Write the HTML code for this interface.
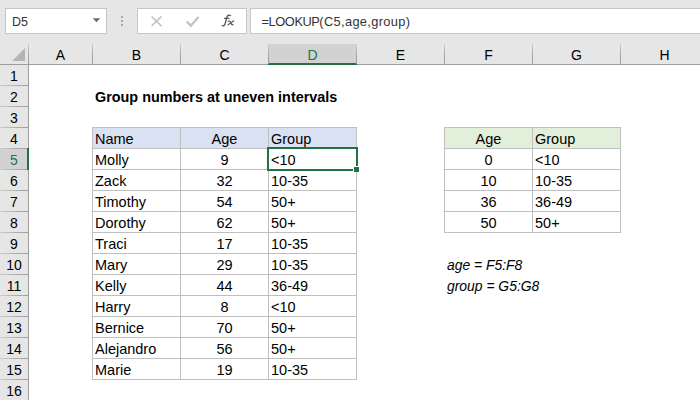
<!DOCTYPE html>
<html><head><meta charset="utf-8"><style>
html,body{margin:0;padding:0;}
body{width:700px;height:400px;position:relative;overflow:hidden;background:#fff;font-family:"Liberation Sans",sans-serif;}
.r{position:absolute;}
.t{position:absolute;white-space:nowrap;line-height:normal;}
</style></head><body>
<div class="r" style="left:0px;top:0px;width:700px;height:44px;background:#e6e6e6;"></div>
<div class="r" style="left:5px;top:8px;width:102px;height:26px;background:#ffffff;box-sizing:border-box;border:1px solid #c6c6c6;"></div>
<div class="t" style="left:12px;top:14.69px;text-align:left;font-size:12.5px;color:#333;font-weight:normal;font-style:normal;">D5</div>
<svg class="r" style="left:92px;top:17px" width="10" height="7"><path d="M0.8 1.2 L8.2 1.2 L4.5 5.2 Z" fill="#6a6a6a"/></svg>
<div class="r" style="left:121px;top:16px;width:2px;height:2px;background:#a6a6a6;"></div>
<div class="r" style="left:121px;top:20px;width:2px;height:2px;background:#a6a6a6;"></div>
<div class="r" style="left:121px;top:24px;width:2px;height:2px;background:#a6a6a6;"></div>
<div class="r" style="left:137px;top:8px;width:110px;height:26px;background:#ffffff;box-sizing:border-box;border:1px solid #c6c6c6;"></div>
<svg class="r" style="left:150px;top:15px" width="13" height="13"><path d="M1.6 1.5 L11.4 11 M11.4 1.5 L1.6 11" stroke="#bdbdbd" stroke-width="1.6" fill="none"/></svg>
<svg class="r" style="left:185px;top:14.5px" width="15" height="13"><path d="M1.8 6.5 L5.8 10.8 L13.5 2" stroke="#c4c4c4" stroke-width="2.4" fill="none"/></svg>
<svg class="r" style="left:219px;top:12px" width="18" height="17"><g fill="none" stroke="#5c5c5c" stroke-linecap="round"><path d="M3.4 13.5 C4.6 14.4 5.6 13.6 6.1 11.6 L8 5 C8.6 3.1 10 2.7 11.5 3.6" stroke-width="1.35"/><path d="M5.4 6.4 L9.9 6.4" stroke-width="1.2"/><path d="M9.3 9.4 C10.6 8.9 11.4 9.6 11.9 10.9 L12.3 11.9 C12.8 12.8 13.6 12.8 14 12.6" stroke-width="1.2"/><path d="M14.6 8.9 L9 12.7" stroke-width="1.2"/></g></svg>
<div class="r" style="left:250px;top:8px;width:460px;height:26px;background:#ffffff;box-sizing:border-box;border:1px solid #c6c6c6;"></div>
<div class="t" style="left:261.5px;top:14.42px;text-align:left;font-size:12.8px;color:#333;font-weight:normal;font-style:normal;letter-spacing:-0.4px;">=LOOKUP</div>
<div class="t" style="left:319.3px;top:14.42px;text-align:left;font-size:12.8px;color:#333;font-weight:normal;font-style:normal;letter-spacing:0.36px;">(C5,age,group)</div>
<div class="r" style="left:0px;top:34px;width:700px;height:30px;background:#e6e6e6;"></div>
<svg class="r" style="left:12px;top:48px" width="14" height="14"><path d="M13 0 L13 13 L0.3 13 Z" fill="#b4b4b4"/></svg>
<div class="t" style="left:29px;top:47.33px;width:63px;text-align:center;font-size:14px;color:#000;font-weight:normal;font-style:normal;">A</div>
<div class="t" style="left:93px;top:47.33px;width:87px;text-align:center;font-size:14px;color:#000;font-weight:normal;font-style:normal;">B</div>
<div class="t" style="left:181px;top:47.33px;width:87px;text-align:center;font-size:14px;color:#000;font-weight:normal;font-style:normal;">C</div>
<div class="r" style="left:268px;top:44px;width:88px;height:20px;background:#d2d2d2;"></div>
<div class="r" style="left:268px;top:63px;width:89px;height:2px;background:#217346;"></div>
<div class="t" style="left:269px;top:47.33px;width:87px;text-align:center;font-size:14px;color:#217346;font-weight:normal;font-style:normal;">D</div>
<div class="t" style="left:357px;top:47.33px;width:87px;text-align:center;font-size:14px;color:#000;font-weight:normal;font-style:normal;">E</div>
<div class="t" style="left:445px;top:47.33px;width:87px;text-align:center;font-size:14px;color:#000;font-weight:normal;font-style:normal;">F</div>
<div class="t" style="left:533px;top:47.33px;width:87px;text-align:center;font-size:14px;color:#000;font-weight:normal;font-style:normal;">G</div>
<div class="t" style="left:621px;top:47.33px;width:87px;text-align:center;font-size:14px;color:#000;font-weight:normal;font-style:normal;">H</div>
<div class="r" style="left:28px;top:44px;width:1px;height:20px;background:linear-gradient(#cfcfcf,#a9a9a9 50%,#9a9a9a);"></div>
<div class="r" style="left:92px;top:44px;width:1px;height:20px;background:linear-gradient(#cfcfcf,#a9a9a9 50%,#9a9a9a);"></div>
<div class="r" style="left:180px;top:44px;width:1px;height:20px;background:linear-gradient(#cfcfcf,#a9a9a9 50%,#9a9a9a);"></div>
<div class="r" style="left:268px;top:44px;width:1px;height:20px;background:linear-gradient(#cfcfcf,#a9a9a9 50%,#9a9a9a);"></div>
<div class="r" style="left:356px;top:44px;width:1px;height:20px;background:linear-gradient(#cfcfcf,#a9a9a9 50%,#9a9a9a);"></div>
<div class="r" style="left:444px;top:44px;width:1px;height:20px;background:linear-gradient(#cfcfcf,#a9a9a9 50%,#9a9a9a);"></div>
<div class="r" style="left:532px;top:44px;width:1px;height:20px;background:linear-gradient(#cfcfcf,#a9a9a9 50%,#9a9a9a);"></div>
<div class="r" style="left:620px;top:44px;width:1px;height:20px;background:linear-gradient(#cfcfcf,#a9a9a9 50%,#9a9a9a);"></div>
<div class="r" style="left:0px;top:64px;width:268px;height:1px;background:#9e9e9e;"></div>
<div class="r" style="left:357px;top:64px;width:343px;height:1px;background:#9e9e9e;"></div>
<div class="r" style="left:0px;top:65px;width:28px;height:335px;background:#e6e6e6;"></div>
<div class="t" style="left:0px;top:68.33px;width:28px;text-align:center;font-size:14px;color:#000;font-weight:normal;font-style:normal;">1</div>
<div class="r" style="left:0px;top:85px;width:28px;height:1px;background:linear-gradient(to right,#cdcdcd,#acacac 60%,#a0a0a0);"></div>
<div class="t" style="left:0px;top:89.33px;width:28px;text-align:center;font-size:14px;color:#000;font-weight:normal;font-style:normal;">2</div>
<div class="r" style="left:0px;top:106px;width:28px;height:1px;background:linear-gradient(to right,#cdcdcd,#acacac 60%,#a0a0a0);"></div>
<div class="t" style="left:0px;top:110.33px;width:28px;text-align:center;font-size:14px;color:#000;font-weight:normal;font-style:normal;">3</div>
<div class="r" style="left:0px;top:127px;width:28px;height:1px;background:linear-gradient(to right,#cdcdcd,#acacac 60%,#a0a0a0);"></div>
<div class="t" style="left:0px;top:131.33px;width:28px;text-align:center;font-size:14px;color:#000;font-weight:normal;font-style:normal;">4</div>
<div class="r" style="left:0px;top:148px;width:28px;height:1px;background:linear-gradient(to right,#cdcdcd,#acacac 60%,#a0a0a0);"></div>
<div class="r" style="left:0px;top:149px;width:27px;height:20px;background:#d2d2d2;"></div>
<div class="t" style="left:0px;top:152.33px;width:28px;text-align:center;font-size:14px;color:#217346;font-weight:normal;font-style:normal;">5</div>
<div class="r" style="left:0px;top:169px;width:28px;height:1px;background:linear-gradient(to right,#cdcdcd,#acacac 60%,#a0a0a0);"></div>
<div class="t" style="left:0px;top:173.33px;width:28px;text-align:center;font-size:14px;color:#000;font-weight:normal;font-style:normal;">6</div>
<div class="r" style="left:0px;top:190px;width:28px;height:1px;background:linear-gradient(to right,#cdcdcd,#acacac 60%,#a0a0a0);"></div>
<div class="t" style="left:0px;top:194.33px;width:28px;text-align:center;font-size:14px;color:#000;font-weight:normal;font-style:normal;">7</div>
<div class="r" style="left:0px;top:211px;width:28px;height:1px;background:linear-gradient(to right,#cdcdcd,#acacac 60%,#a0a0a0);"></div>
<div class="t" style="left:0px;top:215.33px;width:28px;text-align:center;font-size:14px;color:#000;font-weight:normal;font-style:normal;">8</div>
<div class="r" style="left:0px;top:232px;width:28px;height:1px;background:linear-gradient(to right,#cdcdcd,#acacac 60%,#a0a0a0);"></div>
<div class="t" style="left:0px;top:236.33px;width:28px;text-align:center;font-size:14px;color:#000;font-weight:normal;font-style:normal;">9</div>
<div class="r" style="left:0px;top:253px;width:28px;height:1px;background:linear-gradient(to right,#cdcdcd,#acacac 60%,#a0a0a0);"></div>
<div class="t" style="left:0px;top:257.33px;width:28px;text-align:center;font-size:14px;color:#000;font-weight:normal;font-style:normal;">10</div>
<div class="r" style="left:0px;top:274px;width:28px;height:1px;background:linear-gradient(to right,#cdcdcd,#acacac 60%,#a0a0a0);"></div>
<div class="t" style="left:0px;top:278.33px;width:28px;text-align:center;font-size:14px;color:#000;font-weight:normal;font-style:normal;">11</div>
<div class="r" style="left:0px;top:295px;width:28px;height:1px;background:linear-gradient(to right,#cdcdcd,#acacac 60%,#a0a0a0);"></div>
<div class="t" style="left:0px;top:299.33px;width:28px;text-align:center;font-size:14px;color:#000;font-weight:normal;font-style:normal;">12</div>
<div class="r" style="left:0px;top:316px;width:28px;height:1px;background:linear-gradient(to right,#cdcdcd,#acacac 60%,#a0a0a0);"></div>
<div class="t" style="left:0px;top:320.33px;width:28px;text-align:center;font-size:14px;color:#000;font-weight:normal;font-style:normal;">13</div>
<div class="r" style="left:0px;top:337px;width:28px;height:1px;background:linear-gradient(to right,#cdcdcd,#acacac 60%,#a0a0a0);"></div>
<div class="t" style="left:0px;top:341.33px;width:28px;text-align:center;font-size:14px;color:#000;font-weight:normal;font-style:normal;">14</div>
<div class="r" style="left:0px;top:358px;width:28px;height:1px;background:linear-gradient(to right,#cdcdcd,#acacac 60%,#a0a0a0);"></div>
<div class="t" style="left:0px;top:362.33px;width:28px;text-align:center;font-size:14px;color:#000;font-weight:normal;font-style:normal;">15</div>
<div class="r" style="left:0px;top:379px;width:28px;height:1px;background:linear-gradient(to right,#cdcdcd,#acacac 60%,#a0a0a0);"></div>
<div class="t" style="left:0px;top:383.33px;width:28px;text-align:center;font-size:14px;color:#000;font-weight:normal;font-style:normal;">16</div>
<div class="r" style="left:28px;top:64px;width:1px;height:84px;background:#9e9e9e;"></div>
<div class="r" style="left:28px;top:170px;width:1px;height:230px;background:#9e9e9e;"></div>
<div class="r" style="left:27px;top:148px;width:2px;height:22px;background:#217346;"></div>
<div class="r" style="left:29px;top:65px;width:671px;height:335px;background:#ffffff;"></div>
<div class="r" style="left:92px;top:127px;width:264px;height:21px;background:#d9e1f2;"></div>
<div class="r" style="left:92px;top:127px;width:1px;height:253px;background:#bfbfbf;"></div>
<div class="r" style="left:180px;top:127px;width:1px;height:253px;background:#bfbfbf;"></div>
<div class="r" style="left:268px;top:127px;width:1px;height:253px;background:#bfbfbf;"></div>
<div class="r" style="left:356px;top:127px;width:1px;height:253px;background:#bfbfbf;"></div>
<div class="r" style="left:92px;top:127px;width:265px;height:1px;background:#bfbfbf;"></div>
<div class="r" style="left:92px;top:148px;width:265px;height:1px;background:#bfbfbf;"></div>
<div class="r" style="left:92px;top:169px;width:265px;height:1px;background:#bfbfbf;"></div>
<div class="r" style="left:92px;top:190px;width:265px;height:1px;background:#bfbfbf;"></div>
<div class="r" style="left:92px;top:211px;width:265px;height:1px;background:#bfbfbf;"></div>
<div class="r" style="left:92px;top:232px;width:265px;height:1px;background:#bfbfbf;"></div>
<div class="r" style="left:92px;top:253px;width:265px;height:1px;background:#bfbfbf;"></div>
<div class="r" style="left:92px;top:274px;width:265px;height:1px;background:#bfbfbf;"></div>
<div class="r" style="left:92px;top:295px;width:265px;height:1px;background:#bfbfbf;"></div>
<div class="r" style="left:92px;top:316px;width:265px;height:1px;background:#bfbfbf;"></div>
<div class="r" style="left:92px;top:337px;width:265px;height:1px;background:#bfbfbf;"></div>
<div class="r" style="left:92px;top:358px;width:265px;height:1px;background:#bfbfbf;"></div>
<div class="r" style="left:92px;top:379px;width:265px;height:1px;background:#bfbfbf;"></div>
<div class="r" style="left:444px;top:127px;width:176px;height:21px;background:#e2efda;"></div>
<div class="r" style="left:444px;top:127px;width:1px;height:106px;background:#bfbfbf;"></div>
<div class="r" style="left:532px;top:127px;width:1px;height:106px;background:#bfbfbf;"></div>
<div class="r" style="left:620px;top:127px;width:1px;height:106px;background:#bfbfbf;"></div>
<div class="r" style="left:444px;top:127px;width:177px;height:1px;background:#bfbfbf;"></div>
<div class="r" style="left:444px;top:148px;width:177px;height:1px;background:#bfbfbf;"></div>
<div class="r" style="left:444px;top:169px;width:177px;height:1px;background:#bfbfbf;"></div>
<div class="r" style="left:444px;top:190px;width:177px;height:1px;background:#bfbfbf;"></div>
<div class="r" style="left:444px;top:211px;width:177px;height:1px;background:#bfbfbf;"></div>
<div class="r" style="left:444px;top:232px;width:177px;height:1px;background:#bfbfbf;"></div>
<div class="t" style="left:95px;top:88.97px;text-align:left;font-size:14.4px;color:#000;font-weight:bold;font-style:normal;">Group numbers at uneven intervals</div>
<div class="t" style="left:95px;top:130.88px;text-align:left;font-size:14.5px;color:#000;font-weight:normal;font-style:normal;">Name</div>
<div class="t" style="left:181px;top:130.88px;width:87px;text-align:center;font-size:14.5px;color:#000;font-weight:normal;font-style:normal;">Age</div>
<div class="t" style="left:271px;top:130.88px;text-align:left;font-size:14.5px;color:#000;font-weight:normal;font-style:normal;">Group</div>
<div class="t" style="left:95px;top:151.88px;text-align:left;font-size:14.5px;color:#000;font-weight:normal;font-style:normal;">Molly</div>
<div class="t" style="left:181px;top:151.88px;width:87px;text-align:center;font-size:14.5px;color:#000;font-weight:normal;font-style:normal;">9</div>
<div class="t" style="left:271px;top:151.88px;text-align:left;font-size:14.5px;color:#000;font-weight:normal;font-style:normal;">&lt;10</div>
<div class="t" style="left:95px;top:172.88px;text-align:left;font-size:14.5px;color:#000;font-weight:normal;font-style:normal;">Zack</div>
<div class="t" style="left:181px;top:172.88px;width:87px;text-align:center;font-size:14.5px;color:#000;font-weight:normal;font-style:normal;">32</div>
<div class="t" style="left:271px;top:172.88px;text-align:left;font-size:14.5px;color:#000;font-weight:normal;font-style:normal;">10-35</div>
<div class="t" style="left:95px;top:193.88px;text-align:left;font-size:14.5px;color:#000;font-weight:normal;font-style:normal;">Timothy</div>
<div class="t" style="left:181px;top:193.88px;width:87px;text-align:center;font-size:14.5px;color:#000;font-weight:normal;font-style:normal;">54</div>
<div class="t" style="left:271px;top:193.88px;text-align:left;font-size:14.5px;color:#000;font-weight:normal;font-style:normal;">50+</div>
<div class="t" style="left:95px;top:214.88px;text-align:left;font-size:14.5px;color:#000;font-weight:normal;font-style:normal;">Dorothy</div>
<div class="t" style="left:181px;top:214.88px;width:87px;text-align:center;font-size:14.5px;color:#000;font-weight:normal;font-style:normal;">62</div>
<div class="t" style="left:271px;top:214.88px;text-align:left;font-size:14.5px;color:#000;font-weight:normal;font-style:normal;">50+</div>
<div class="t" style="left:95px;top:235.88px;text-align:left;font-size:14.5px;color:#000;font-weight:normal;font-style:normal;">Traci</div>
<div class="t" style="left:181px;top:235.88px;width:87px;text-align:center;font-size:14.5px;color:#000;font-weight:normal;font-style:normal;">17</div>
<div class="t" style="left:271px;top:235.88px;text-align:left;font-size:14.5px;color:#000;font-weight:normal;font-style:normal;">10-35</div>
<div class="t" style="left:95px;top:256.88px;text-align:left;font-size:14.5px;color:#000;font-weight:normal;font-style:normal;">Mary</div>
<div class="t" style="left:181px;top:256.88px;width:87px;text-align:center;font-size:14.5px;color:#000;font-weight:normal;font-style:normal;">29</div>
<div class="t" style="left:271px;top:256.88px;text-align:left;font-size:14.5px;color:#000;font-weight:normal;font-style:normal;">10-35</div>
<div class="t" style="left:95px;top:277.88px;text-align:left;font-size:14.5px;color:#000;font-weight:normal;font-style:normal;">Kelly</div>
<div class="t" style="left:181px;top:277.88px;width:87px;text-align:center;font-size:14.5px;color:#000;font-weight:normal;font-style:normal;">44</div>
<div class="t" style="left:271px;top:277.88px;text-align:left;font-size:14.5px;color:#000;font-weight:normal;font-style:normal;">36-49</div>
<div class="t" style="left:95px;top:298.88px;text-align:left;font-size:14.5px;color:#000;font-weight:normal;font-style:normal;">Harry</div>
<div class="t" style="left:181px;top:298.88px;width:87px;text-align:center;font-size:14.5px;color:#000;font-weight:normal;font-style:normal;">8</div>
<div class="t" style="left:271px;top:298.88px;text-align:left;font-size:14.5px;color:#000;font-weight:normal;font-style:normal;">&lt;10</div>
<div class="t" style="left:95px;top:319.88px;text-align:left;font-size:14.5px;color:#000;font-weight:normal;font-style:normal;">Bernice</div>
<div class="t" style="left:181px;top:319.88px;width:87px;text-align:center;font-size:14.5px;color:#000;font-weight:normal;font-style:normal;">70</div>
<div class="t" style="left:271px;top:319.88px;text-align:left;font-size:14.5px;color:#000;font-weight:normal;font-style:normal;">50+</div>
<div class="t" style="left:95px;top:340.88px;text-align:left;font-size:14.5px;color:#000;font-weight:normal;font-style:normal;">Alejandro</div>
<div class="t" style="left:181px;top:340.88px;width:87px;text-align:center;font-size:14.5px;color:#000;font-weight:normal;font-style:normal;">56</div>
<div class="t" style="left:271px;top:340.88px;text-align:left;font-size:14.5px;color:#000;font-weight:normal;font-style:normal;">50+</div>
<div class="t" style="left:95px;top:361.88px;text-align:left;font-size:14.5px;color:#000;font-weight:normal;font-style:normal;">Marie</div>
<div class="t" style="left:181px;top:361.88px;width:87px;text-align:center;font-size:14.5px;color:#000;font-weight:normal;font-style:normal;">19</div>
<div class="t" style="left:271px;top:361.88px;text-align:left;font-size:14.5px;color:#000;font-weight:normal;font-style:normal;">10-35</div>
<div class="t" style="left:445px;top:130.88px;width:87px;text-align:center;font-size:14.5px;color:#000;font-weight:normal;font-style:normal;">Age</div>
<div class="t" style="left:535px;top:130.88px;text-align:left;font-size:14.5px;color:#000;font-weight:normal;font-style:normal;">Group</div>
<div class="t" style="left:445px;top:151.88px;width:87px;text-align:center;font-size:14.5px;color:#000;font-weight:normal;font-style:normal;">0</div>
<div class="t" style="left:535px;top:151.88px;text-align:left;font-size:14.5px;color:#000;font-weight:normal;font-style:normal;">&lt;10</div>
<div class="t" style="left:445px;top:172.88px;width:87px;text-align:center;font-size:14.5px;color:#000;font-weight:normal;font-style:normal;">10</div>
<div class="t" style="left:535px;top:172.88px;text-align:left;font-size:14.5px;color:#000;font-weight:normal;font-style:normal;">10-35</div>
<div class="t" style="left:445px;top:193.88px;width:87px;text-align:center;font-size:14.5px;color:#000;font-weight:normal;font-style:normal;">36</div>
<div class="t" style="left:535px;top:193.88px;text-align:left;font-size:14.5px;color:#000;font-weight:normal;font-style:normal;">36-49</div>
<div class="t" style="left:445px;top:214.88px;width:87px;text-align:center;font-size:14.5px;color:#000;font-weight:normal;font-style:normal;">50</div>
<div class="t" style="left:535px;top:214.88px;text-align:left;font-size:14.5px;color:#000;font-weight:normal;font-style:normal;">50+</div>
<div class="t" style="left:447px;top:257.42px;text-align:left;font-size:13.9px;color:#000;font-weight:normal;font-style:italic;">age = F5:F8</div>
<div class="t" style="left:447px;top:278.42px;text-align:left;font-size:13.9px;color:#000;font-weight:normal;font-style:italic;">group = G5:G8</div>
<div class="r" style="left:267px;top:147px;width:91px;height:2px;background:#217346;"></div>
<div class="r" style="left:267px;top:147px;width:2px;height:24px;background:#217346;"></div>
<div class="r" style="left:356px;top:147px;width:2px;height:19px;background:#217346;"></div>
<div class="r" style="left:267px;top:169px;width:86px;height:2px;background:#217346;"></div>
<div class="r" style="left:353px;top:166px;width:6px;height:6px;background:#ffffff;"></div>
<div class="r" style="left:354px;top:167px;width:5px;height:5px;background:#217346;"></div>
</body></html>
